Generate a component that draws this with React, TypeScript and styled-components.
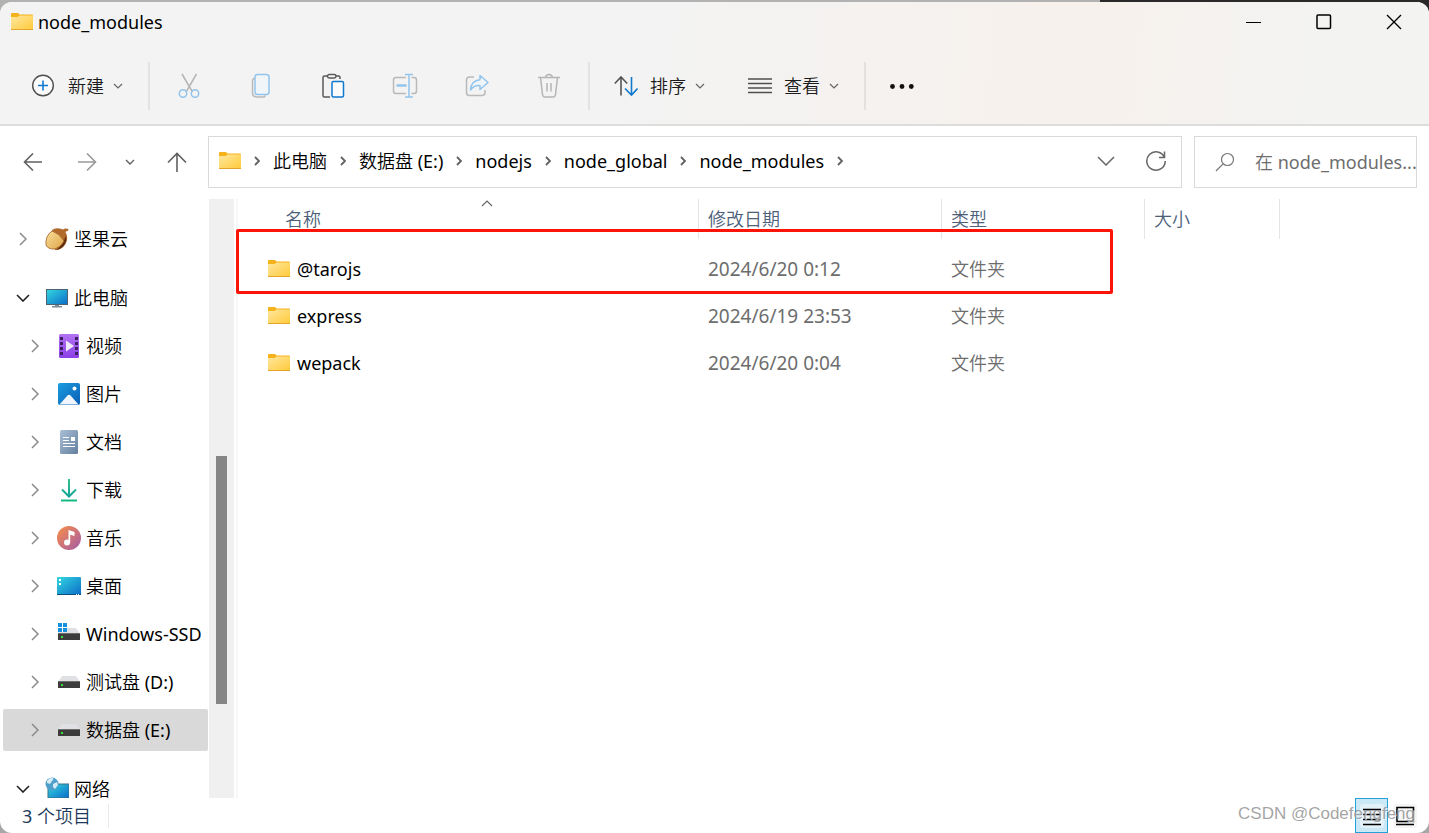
import React from "react";
import styled, { createGlobalStyle } from "styled-components";

const GlobalStyle = createGlobalStyle`
  * { box-sizing: border-box; }
  body {
    margin: 0;
    font-family: "Noto Sans", "Noto Sans CJK SC DemiLight", "Noto Sans CJK SC Light", "Noto Sans CJK SC", sans-serif;
    font-size: 18px;
    line-height: 24px;
    color: #000;
  }
  button, input { font: inherit; color: inherit; }
  button { border: 0; padding: 0; background: none; cursor: pointer; }
  a { color: inherit; text-decoration: none; }
  svg { display: block; flex: none; }
`;

const Desktop = styled.div`
  height: 100vh;
  padding-top: 2px;
  background:
    linear-gradient(90deg, #b2b2b2 0 77%, #2b2829 77%) top / 100% 20px no-repeat,
    #a6a6a6;
`;

const Window = styled.div`
  position: relative;
  display: flex;
  flex-direction: column;
  height: 100%;
  border-radius: 12px;
  overflow: hidden;
  background: #fff;
`;

const Header = styled.header`
  flex: none;
  border-bottom: 2px solid #dfdddb;
  background: linear-gradient(96deg, #f3f3f3 44%, #f6f1ed 72%, #f6f1ed 78%, #f3f3f2 92%);
`;

const TitleBar = styled.div`
  display: flex;
  align-items: center;
  height: 40px;
  padding-left: 11px;
`;

const Title = styled.h1`
  flex: 1;
  margin: 0 0 0 5px;
  font-size: 18px;
  font-weight: 400;
`;

const CaptionButton = styled.button`
  display: grid;
  place-items: center;
  width: 70px;
  height: 40px;
`;

const CommandBar = styled.div`
  display: flex;
  align-items: center;
  padding: 20px 8px 14px;
`;

const MenuGroup = styled.div`
  display: flex;
  padding-right: 6px;
`;

const MenuButton = styled.button`
  display: flex;
  align-items: center;
  height: 48px;
  padding: 0 19px 0 24px;
  color: #1b1b1b;
`;

const MenuLabel = styled.span`
  margin: 0 9px 0 12px;
`;

const IconGroup = styled.div`
  display: flex;
  padding: 0 3px;
`;

const ToolButton = styled.button`
  display: grid;
  place-items: center;
  width: 72px;
  height: 48px;
`;

const Separator = styled.div`
  width: 2px;
  height: 48px;
  background: #e3e2e1;
`;

const NavBar = styled.div`
  display: flex;
  flex: none;
  padding: 10px 12px 11px 5px;
`;

const NavButtons = styled.div`
  display: grid;
  grid-template-columns: 55px 54px 32px 62px;
`;

const NavButton = styled.button`
  display: grid;
  place-items: center;
`;

const AddressBox = styled.div`
  display: flex;
  align-items: center;
  flex: 1;
  min-width: 0;
  height: 52px;
  padding: 0 14px 2px 10px;
  border: 1px solid #d9d9d9;
`;

const Crumbs = styled.ol`
  display: flex;
  flex: 1;
  margin: 0;
  padding: 0;
  list-style: none;
`;

const Crumb = styled.li`
  display: flex;
  align-items: center;
  white-space: nowrap;
`;

const CrumbArrow = styled.span`
  display: grid;
  place-items: center;
  width: 32px;
  height: 24px;
`;

const BoxButton = styled.button<{ $width: number }>`
  display: grid;
  place-items: center;
  width: ${(p) => p.$width}px;
  height: 48px;
`;

const SearchBox = styled.label`
  display: flex;
  align-items: center;
  gap: 20px;
  width: 223px;
  height: 52px;
  margin-left: 12px;
  padding-left: 20px;
  border: 1px solid #d9d9d9;
`;

const SearchInput = styled.input`
  flex: 1;
  min-width: 0;
  padding: 0;
  border: 0;
  outline: 0;
  background: none;
  &::placeholder { color: #6d6d6d; opacity: 1; }
`;

const Body = styled.div`
  display: flex;
  flex: 1;
  min-height: 0;
`;

const Sidebar = styled.nav`
  flex: none;
  width: 209px;
  padding: 19px 1px 0 3px;
  overflow: hidden;
`;

const TreeGroup = styled.ul`
  display: grid;
  gap: 6px;
  margin: 0 0 17px;
  padding: 0;
  list-style: none;
`;

const TreeItem = styled.a<{ $nested?: boolean; $selected?: boolean }>`
  display: flex;
  align-items: center;
  height: 42px;
  padding-left: ${(p) => (p.$nested ? 24 : 12)}px;
  border-radius: 2px;
  background: ${(p) => (p.$selected ? "#d9d9d9" : "transparent")};
  white-space: nowrap;
`;

const ArrowSlot = styled.span`
  display: grid;
  place-items: center;
  width: 15px;
`;

const TreeIcon = styled.span`
  display: grid;
  place-items: center;
  width: 24px;
  height: 24px;
  margin: 0 5px 0 15px;
`;

const ScrollTrack = styled.div`
  display: grid;
  grid-template-rows: 257fr 248fr 94fr;
  flex: none;
  width: 25px;
  padding: 0 7px;
  background: #f0f0f0;
`;

const ScrollThumb = styled.div`
  grid-row: 2;
  background: #868686;
`;

const Content = styled.main`
  position: relative;
  flex: 1;
  min-width: 0;
  margin-left: 2px;
  border-left: 2px solid #f7f7f7;
`;

const FileTable = styled.table`
  width: 100%;
  table-layout: fixed;
  border-collapse: separate;
  border-spacing: 0;
  text-align: left;
  tbody::before { content: ""; display: block; height: 6px; }
`;

const Column = styled.col<{ $width?: number }>`
  width: ${(p) => (p.$width ? p.$width + "px" : "auto")};
`;

const HeadCell = styled.th<{ $first?: boolean }>`
  position: relative;
  height: 40px;
  padding: 0 0 0 ${(p) => (p.$first ? 47 : 9)}px;
  border-right: 1px solid #e5e5e5;
  color: #4c607a;
  font-weight: 400;
  &:last-child { border-right: 0; }
`;

const SortMark = styled.span`
  position: absolute;
  top: 1px;
  left: 50%;
  margin-left: 13px;
`;

const Cell = styled.td`
  height: 47px;
  padding: 0 0 0 9px;
  color: #6d6d6d;
`;

const DateText = styled.time`
  font-size: 19px;
`;

const FileLink = styled.a`
  display: flex;
  align-items: center;
  gap: 7px;
  padding-left: 21px;
  color: #000;
`;

const Highlight = styled.div`
  position: absolute;
  top: 30px;
  left: -2px;
  width: 877px;
  height: 65px;
  border: 3px solid #fb1508;
  border-radius: 2px;
  pointer-events: none;
`;

const StatusBar = styled.footer`
  display: flex;
  align-items: center;
  flex: none;
  height: 35px;
  padding: 0 8px 0 22px;
  color: #1e395b;
`;

const StatusText = styled.span`
  flex: 1;
`;

const StatusCount = styled.span`
  display: inline-block;
  padding-right: 17px;
  border-right: 1px solid #e9e9e9;
`;

const ViewButton = styled.button<{ $active?: boolean }>`
  display: grid;
  place-items: center;
  width: 33px;
  height: 35px;
  border: 1px solid ${(p) => (p.$active ? "#26a0da" : "transparent")};
  background: ${(p) => (p.$active ? "#cbe8f6" : "transparent")};
`;

const Watermark = styled.div`
  position: absolute;
  right: 14px;
  bottom: 7px;
  font-family: "Liberation Sans", Arial, sans-serif;
  font-size: 17px;
  color: #8f8f8fd0;
  text-shadow: 1px 1px 0 #ffffffb0;
  pointer-events: none;
`;

type Dir = "right" | "down" | "up";

function Chevron({ dir, size = 10, color = "#666", weight = 1.2 }: { dir: Dir; size?: number; color?: string; weight?: number }) {
  const h = size / 2;
  const sideways = dir === "right";
  const d = sideways
    ? `M1 1L${h} ${h}L1 ${size - 1}`
    : dir === "down"
      ? `M1 1L${h} ${h}L${size - 1} 1`
      : `M1 ${h}L${h} 1L${size - 1} ${h}`;
  return (
    <svg width={sideways ? h + 1 : size} height={sideways ? size : h + 1} fill="none" stroke={color} strokeWidth={weight} aria-hidden="true">
      <path d={d} />
    </svg>
  );
}

function FolderIcon() {
  return (
    <svg width="22" height="18" viewBox="0 0 22 18" aria-hidden="true">
      <defs>
        <linearGradient id="folder" x1="0" y1="0" x2="1" y2="1">
          <stop offset="0" stopColor="#ffe7a0" />
          <stop offset="1" stopColor="#ffca38" />
        </linearGradient>
      </defs>
      <path d="M0 1q0-1 1-1h5.500q.7 0 1.200.6l.8.9H21q1 0 1 1V8H0z" fill="#f5b21b" />
      <path d="M0 4h6.500l2-1.500H22V17H0z" fill="url(#folder)" />
      <path d="M0 16h22v1H0z" fill="#e5a52a" />
    </svg>
  );
}

const NewIcon = () => (
  <svg width="24" height="24" fill="none" strokeWidth="1.4">
    <circle cx="11" cy="11.500" r="10.300" fill="#fbfbfb" stroke="#505050" />
    <path d="M11 6.500v10M6 11.500h10" stroke="#0f78cf" strokeWidth="1.600" />
  </svg>
);

const CutIcon = () => (
  <svg width="24" height="26" fill="none" strokeWidth="1.500">
    <path d="M5 1l10.500 18M19.500 1L9 19" stroke="#b5b5b5" />
    <circle cx="6" cy="20.500" r="3.700" stroke="#93c5ec" />
    <circle cx="18" cy="20.500" r="3.700" stroke="#93c5ec" />
  </svg>
);

const CopyIcon = () => (
  <svg width="20" height="26" fill="none" strokeWidth="1.500">
    <path d="M3.500 5Q1.500 6 1.500 8v11.500q0 4.500 4.500 4.500h5.500q2 0 3-1.500" stroke="#b9b9b9" />
    <rect x="4" y="1.500" width="14" height="20" rx="2.500" stroke="#93c5ec" fill="#f0f5f9" />
  </svg>
);

const PasteIcon = () => (
  <svg width="24" height="26" fill="none" strokeWidth="1.500">
    <path d="M6 3H3.500Q2 3 2 4.500v18Q2 24 3.500 24H9M15 3h2.500Q19 3 19 4.500V6" stroke="#5a5a5a" />
    <rect x="6.500" y="1.500" width="8.500" height="3.500" rx="1.700" stroke="#5a5a5a" fill="#f7f7f7" />
    <rect x="11" y="8.500" width="11.500" height="15.500" rx="1.500" stroke="#0f78cf" fill="#f9fbfd" />
  </svg>
);

const RenameIcon = () => (
  <svg width="26" height="26" fill="none" strokeWidth="1.500">
    <path d="M14 4.500H4Q1.500 4.500 1.500 7v11q0 2.500 2.500 2.500h10M19.500 4.500H22q2.500 0 2.500 2.500v11q0 2.500-2.500 2.500h-2.500" stroke="#b9b9b9" />
    <path d="M13 1.500h8M13 24h8M17 1.500V24" stroke="#93c5ec" />
    <path d="M5.500 12.500h8" stroke="#93c5ec" strokeWidth="2.500" strokeLinecap="round" />
  </svg>
);

const ShareIcon = () => (
  <svg width="24" height="24" fill="none" strokeWidth="1.500" strokeLinejoin="round">
    <path d="M9 3H4.500Q1.500 3 1.500 6v12.500q0 3 3 3H17q3 0 3-3V16" stroke="#b9b9b9" />
    <path d="M15 1.500l8 7-8 7V11.500q-6-.8-9.500 4.500Q6 6.500 15 5.700z" stroke="#93c5ec" fill="#f0f5f9" />
  </svg>
);

const TrashIcon = () => (
  <svg width="24" height="26" fill="none" stroke="#b5b5b5" strokeWidth="1.500">
    <path d="M1 4.500h22M3.500 4.500l2 17q.3 2.500 2.500 2.500h8q2.200 0 2.500-2.500l2-17M8.500 4.500Q9 1.500 12 1.500t3.500 3M10 10v8.500M14 10v8.500" />
  </svg>
);

const SortIcon = () => (
  <svg width="24" height="22" fill="none" strokeWidth="1.600">
    <path d="M7 20.500V2M.8 8.500L7 2l6.200 6.500" stroke="#555" />
    <path d="M17.500 2v18M11 13.500l6.500 6.500 6-6.500" stroke="#0f78cf" />
  </svg>
);

const ViewIcon = () => (
  <svg width="24" height="18" stroke="#4f4f4f" strokeWidth="1.500">
    <path d="M0 2h24M0 6.500h24M0 11h24M0 15.500h24" />
  </svg>
);

const DotsIcon = () => (
  <svg width="24" height="6" fill="#111">
    <circle cx="2.500" cy="3.500" r="2.400" />
    <circle cx="12" cy="3.500" r="2.400" />
    <circle cx="21.300" cy="3.500" r="2.400" />
  </svg>
);

const Arrow = ({ d, color }: { d: string; color: string }) => (
  <svg width="20" height="20" fill="none" stroke={color} strokeWidth="1.600">
    <path d={d} />
  </svg>
);

const RefreshIcon = () => (
  <svg width="22" height="22" fill="none" stroke="#666" strokeWidth="1.500">
    <path d="M19.500 7.500A9.200 9.200 0 1 0 20.200 11M19.500 1.500v6h-5.500" />
  </svg>
);

const SearchIcon = () => (
  <svg width="20" height="20" fill="none" stroke="#777" strokeWidth="1.200">
    <circle cx="12.500" cy="7.500" r="6" />
    <path d="M8.300 11.700L1 19" />
  </svg>
);

const NutIcon = () => (
  <svg width="24" height="24">
    <defs>
      <linearGradient id="nut" x1="0" y1="0" x2="1" y2="1">
        <stop offset="0" stopColor="#fadf9c" />
        <stop offset="1" stopColor="#dda548" />
      </linearGradient>
    </defs>
    <path d="M7 3Q11 0 18 2.500 20 1 23.500 2l-.5 2q-2 0-2.500 1Q24 11 20.500 17 17 23 10 23z" fill="#b06a2c" />
    <path d="M21 9q1 4-1 8-3 5-9 6 6-4 10-14z" fill="#5f2c0f" />
    <path d="M7 4q7 2 12 10-3 6-9 8-7 .5-9-4Q0 9 7 4z" fill="url(#nut)" stroke="#9f6022" strokeWidth=".8" />
  </svg>
);

const ScreenFill = ({ id }: { id: string }) => (
  <defs>
    <linearGradient id={id} x1="0" y1="0" x2="1" y2="1">
      <stop offset="0" stopColor="#34d8e0" />
      <stop offset="1" stopColor="#0a6cc8" />
    </linearGradient>
  </defs>
);

const ComputerIcon = () => (
  <svg width="24" height="20">
    <ScreenFill id="pc" />
    <path d="M10 15h4v3h3v1.500H7V18h3z" fill="#7c8b99" />
    <rect x="1.500" y="1.500" width="21" height="15" fill="url(#pc)" stroke="#4d6372" />
  </svg>
);

const VideoIcon = () => (
  <svg width="20" height="24">
    <defs>
      <linearGradient id="video" x1="0" y1="0" x2="0" y2="1">
        <stop offset="0" stopColor="#b273f2" />
        <stop offset="1" stopColor="#8b3fe6" />
      </linearGradient>
    </defs>
    <rect width="20" height="24" rx="1.500" fill="url(#video)" />
    <path d="M2.500 3v18M17.500 3v18" stroke="#3d1f63" strokeWidth="3" strokeDasharray="3 2" />
    <path d="M7 6.500v11l8-5.500z" fill="#f1eaf8" />
  </svg>
);

const PictureIcon = () => (
  <svg width="22" height="22">
    <defs>
      <linearGradient id="picture" x1="0" y1="0" x2="1" y2="1">
        <stop offset="0" stopColor="#1b9de0" />
        <stop offset="1" stopColor="#0a5eb4" />
      </linearGradient>
    </defs>
    <rect width="22" height="22" rx="2" fill="url(#picture)" />
    <path d="M1.500 21.500l8-9q1.500-1.500 3 0l8 9z" fill="#f1f6fc" />
    <circle cx="16.500" cy="5.500" r="2" fill="#fff" />
  </svg>
);

const DocumentIcon = () => (
  <svg width="18" height="24">
    <defs>
      <linearGradient id="document" x1="0" y1="0" x2="1" y2="1">
        <stop offset="0" stopColor="#a9bfd5" />
        <stop offset="1" stopColor="#64809f" />
      </linearGradient>
    </defs>
    <rect width="18" height="24" rx="1.500" fill="url(#document)" />
    <path d="M3 7.500h6M3 10.500h6M3 13.500h12M3 16.500h12" stroke="#fff" />
    <rect x="11" y="7" width="4" height="4" fill="#fff" />
  </svg>
);

const DownloadIcon = () => (
  <svg width="18" height="24" fill="none" strokeWidth="2">
    <defs>
      <linearGradient id="download" gradientUnits="userSpaceOnUse" x1="0" y1="0" x2="0" y2="20">
        <stop offset="0" stopColor="#35c48a" />
        <stop offset="1" stopColor="#109f9c" />
      </linearGradient>
    </defs>
    <path d="M9 1v17M2 11.500l7 7 7-7" stroke="url(#download)" />
    <path d="M1 22.500h16" stroke="#16b884" />
  </svg>
);

const MusicIcon = () => (
  <svg width="24" height="24">
    <defs>
      <linearGradient id="music" x1="0" y1="0" x2="1" y2="1">
        <stop offset=".1" stopColor="#f1894f" />
        <stop offset=".9" stopColor="#ac5f9f" />
      </linearGradient>
    </defs>
    <circle cx="12" cy="12" r="12" fill="url(#music)" />
    <circle cx="10" cy="16.500" r="3" fill="#fff" />
    <path d="M11.500 16.500V4l6 2v4l-4.300-1.300v7.800z" fill="#fff" />
  </svg>
);

const DesktopIcon = () => (
  <svg width="24" height="18">
    <ScreenFill id="desk" />
    <rect width="24" height="18" rx="1" fill="url(#desk)" />
    <path d="M0 17h24v1H0z" fill="#0b4e77" />
    <path d="M2 2h2v2H2zM2 6h2v2H2z" fill="#fff" />
    <path d="M19 17h1v1h-1zM21 17h1v1h-1z" fill="#fff" />
  </svg>
);

const DriveIcon = ({ system }: { system?: boolean }) => (
  <svg width="22" height="22">
    <path d={system ? "M9 5h9l4 6H0V9h9z" : "M4 5h14l4 6H0z"} fill="#dfe1e4" />
    <path d="M0 10h22v7H0z" fill="#3c3c3c" />
    <path d="M0 10h22v1H0z" fill="#6c6c6c" />
    <path d="M3 13h2v2H3z" fill="#36e03a" />
    {system && <path d="M0 0h4v4H0zM5 0h4v4H5zM0 5h4v4H0zM5 5h4v4H5z" fill="#1490df" />}
  </svg>
);

const NetworkIcon = () => (
  <svg width="24" height="24">
    <ScreenFill id="net" />
    <path d="M3 7h21v14H3z" fill="url(#net)" stroke="#3e6f86" />
    <circle cx="7" cy="7" r="6.500" fill="#4f9fcb" />
    <path d="M2 4q3-4 6-3 1 2-1 3l-2 3-3-1zM8 7l4-2 1 3-3 4-2-2z" fill="#d6ecf5" />
  </svg>
);

interface TreeNode {
  label: string;
  icon: React.ReactNode;
  open?: boolean;
  selected?: boolean;
  children?: TreeNode[];
}

const tree: TreeNode[] = [
  { label: "坚果云", icon: <NutIcon /> },
  {
    label: "此电脑",
    icon: <ComputerIcon />,
    open: true,
    children: [
      { label: "视频", icon: <VideoIcon /> },
      { label: "图片", icon: <PictureIcon /> },
      { label: "文档", icon: <DocumentIcon /> },
      { label: "下载", icon: <DownloadIcon /> },
      { label: "音乐", icon: <MusicIcon /> },
      { label: "桌面", icon: <DesktopIcon /> },
      { label: "Windows-SSD", icon: <DriveIcon system /> },
      { label: "测试盘 (D:)", icon: <DriveIcon /> },
      { label: "数据盘 (E:)", icon: <DriveIcon />, selected: true },
    ],
  },
  { label: "网络", icon: <NetworkIcon />, open: true },
];

function TreeRow({ node, nested }: { node: TreeNode; nested?: boolean }) {
  return (
    <li>
      <TreeItem href="#" $nested={nested} $selected={node.selected}>
        <ArrowSlot>
          {node.open ? <Chevron dir="down" size={14} color="#222" weight={1.6} /> : <Chevron dir="right" size={14} color="#8a8a8a" weight={1.5} />}
        </ArrowSlot>
        <TreeIcon>{node.icon}</TreeIcon>
        {node.label}
      </TreeItem>
    </li>
  );
}

const tools = [
  { label: "剪切", icon: <CutIcon /> },
  { label: "复制", icon: <CopyIcon /> },
  { label: "粘贴", icon: <PasteIcon /> },
  { label: "重命名", icon: <RenameIcon /> },
  { label: "共享", icon: <ShareIcon /> },
  { label: "删除", icon: <TrashIcon /> },
];

const crumbs = ["此电脑", "数据盘 (E:)", "nodejs", "node_global", "node_modules"];

const files = [
  { name: "@tarojs", date: "2024/6/20 0:12" },
  { name: "express", date: "2024/6/19 23:53" },
  { name: "wepack", date: "2024/6/20 0:04" },
];

function Menu({ icon, label }: { icon: React.ReactNode; label: string }) {
  return (
    <MenuButton>
      {icon}
      <MenuLabel>{label}</MenuLabel>
      <Chevron dir="down" />
    </MenuButton>
  );
}

export default function App() {
  return (
    <Desktop>
      <GlobalStyle />
      <Window>
        <Header>
          <TitleBar>
            <FolderIcon />
            <Title>node_modules</Title>
            <CaptionButton aria-label="最小化">
              <svg width="16" height="16" stroke="#000"><path d="M0 8.500h15" /></svg>
            </CaptionButton>
            <CaptionButton aria-label="最大化">
              <svg width="16" height="16" fill="none" stroke="#000" strokeWidth="1.500"><rect x="1" y="1" width="13.500" height="13.500" rx="1" /></svg>
            </CaptionButton>
            <CaptionButton aria-label="关闭">
              <svg width="16" height="16" stroke="#000" strokeWidth="1.400"><path d="M1 1l14 14M15 1l-14 14" /></svg>
            </CaptionButton>
          </TitleBar>
          <CommandBar>
            <MenuGroup>
              <Menu icon={<NewIcon />} label="新建" />
            </MenuGroup>
            <Separator />
            <IconGroup>
              {tools.map((t) => (
                <ToolButton key={t.label} aria-label={t.label}>{t.icon}</ToolButton>
              ))}
            </IconGroup>
            <Separator />
            <MenuGroup>
              <Menu icon={<SortIcon />} label="排序" />
              <Menu icon={<ViewIcon />} label="查看" />
            </MenuGroup>
            <Separator />
            <ToolButton aria-label="更多"><DotsIcon /></ToolButton>
          </CommandBar>
        </Header>

        <NavBar>
          <NavButtons>
            <NavButton aria-label="后退"><Arrow d="M19 10H1.500M10 1.500L1.500 10l8.500 8.500" color="#606060" /></NavButton>
            <NavButton aria-label="前进"><Arrow d="M1 10h17.500M10 1.500l8.500 8.500-8.500 8.500" color="#999" /></NavButton>
            <NavButton aria-label="最近"><Chevron dir="down" color="#606060" weight={1.4} /></NavButton>
            <NavButton aria-label="向上"><Arrow d="M10 20V1.500M1 10.500l9-9 9 9" color="#606060" /></NavButton>
          </NavButtons>
          <AddressBox>
            <FolderIcon />
            <Crumbs>
              {crumbs.map((c) => (
                <Crumb key={c}>
                  <CrumbArrow><Chevron dir="right" color="#606060" weight={1.8} /></CrumbArrow>
                  <a href="#">{c}</a>
                </Crumb>
              ))}
              <Crumb><CrumbArrow><Chevron dir="right" color="#606060" weight={1.8} /></CrumbArrow></Crumb>
            </Crumbs>
            <BoxButton $width={78} aria-label="历史"><Chevron dir="down" size={18} weight={1.5} /></BoxButton>
            <BoxButton $width={22} aria-label="刷新"><RefreshIcon /></BoxButton>
          </AddressBox>
          <SearchBox>
            <SearchIcon />
            <SearchInput type="text" placeholder="在 node_modules..." aria-label="搜索" />
          </SearchBox>
        </NavBar>

        <Body>
          <Sidebar>
            {tree.map((n) => (
              <TreeGroup key={n.label}>
                <TreeRow node={n} />
                {n.children?.map((c) => <TreeRow key={c.label} node={c} nested />)}
              </TreeGroup>
            ))}
          </Sidebar>
          <ScrollTrack><ScrollThumb /></ScrollTrack>
          <Content>
            <FileTable>
              <colgroup>
                <Column $width={461} />
                <Column $width={243} />
                <Column $width={203} />
                <Column $width={135} />
                <Column />
              </colgroup>
              <thead>
                <tr>
                  <HeadCell $first>
                    名称
                    <SortMark><Chevron dir="up" size={12} /></SortMark>
                  </HeadCell>
                  <HeadCell>修改日期</HeadCell>
                  <HeadCell>类型</HeadCell>
                  <HeadCell>大小</HeadCell>
                  <HeadCell />
                </tr>
              </thead>
              <tbody>
                {files.map((f) => (
                  <tr key={f.name}>
                    <Cell><FileLink href="#"><FolderIcon />{f.name}</FileLink></Cell>
                    <Cell><DateText>{f.date}</DateText></Cell>
                    <Cell>文件夹</Cell>
                    <Cell />
                    <Cell />
                  </tr>
                ))}
              </tbody>
            </FileTable>
            <Highlight />
          </Content>
        </Body>

        <StatusBar>
          <StatusText><StatusCount>3 个项目</StatusCount></StatusText>
          <ViewButton $active aria-label="详细信息">
            <svg width="24" height="24">
              <rect width="24" height="24" rx="3" fill="#e3f1f8" />
              <path d="M3 5.500h18M3 10.500h18M3 15.500h18M3 20.500h18" stroke="#000" strokeWidth="1.400" />
            </svg>
          </ViewButton>
          <ViewButton aria-label="大图标">
            <svg width="24" height="24" fill="none">
              <rect width="24" height="24" rx="3" fill="#f5f5f5" />
              <path d="M4 3.500h16.500v14H4zM3 20.500h18" stroke="#000" strokeWidth="1.600" />
            </svg>
          </ViewButton>
        </StatusBar>
        <Watermark>CSDN @Codefengfeng</Watermark>
      </Window>
    </Desktop>
  );
}
